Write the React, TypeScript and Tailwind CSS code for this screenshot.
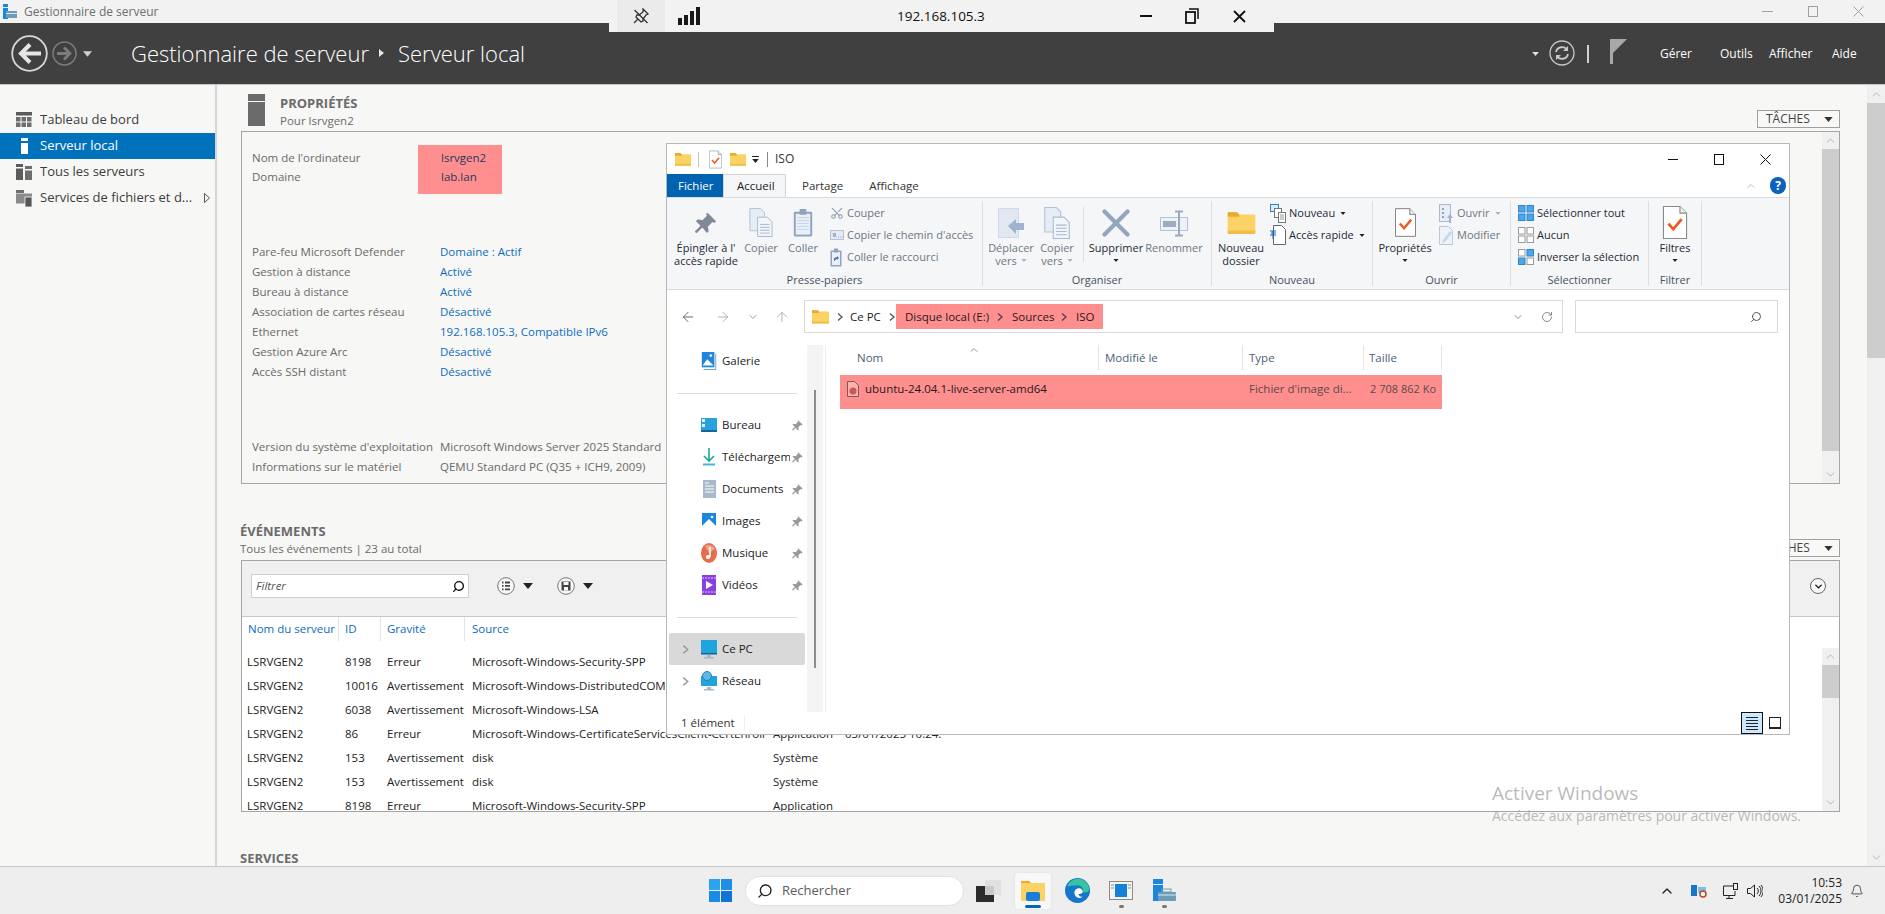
import { ChevronDown, ChevronRight, ChevronUp, ArrowLeft, ArrowRight, ArrowUp, RotateCw, Search, Scissors, Bell } from "lucide-react";
import type { ReactNode } from "react";

type IconProps = { className?: string };

const Tri = ({ className = "" }: IconProps) => (
  <svg viewBox="0 0 10 6" className={className}>
    <path d="M0 0h10L5 6z" fill="currentColor" />
  </svg>
);

const Chev = ({ className = "" }: IconProps) => (
  <svg viewBox="0 0 8 10" className={className}>
    <path d="M2 1.5 6 5 2 8.5" fill="none" stroke="currentColor" strokeWidth="1.3" />
  </svg>
);

const Folder = ({ className = "" }: IconProps) => (
  <svg viewBox="0 0 24 20" className={className}>
    <path d="M0 2a1 1 0 0 1 1-1h7l2 2h13a1 1 0 0 1 1 1v15a1 1 0 0 1-1 1H1a1 1 0 0 1-1-1z" fill="#fbd264" />
    <path d="M0 2a1 1 0 0 1 1-1h7l2 2v2H0z" fill="#e8ab2e" />
    <path d="M0 17h24v2a1 1 0 0 1-1 1H1a1 1 0 0 1-1-1z" fill="#f1bd4a" />
  </svg>
);

const PinIcon = ({ className = "" }: IconProps) => (
  <svg viewBox="0 0 24 24" className={className}>
    <path d="M14 1l9 9-2 2-2-1-5 5 1 5-2 2-5-6-6 6-2-1 0-1 6-6-5-5 2-2 5 1 5-5-1-2z" fill="currentColor" />
  </svg>
);

const DocCheck = ({ className = "", stroke = "#7d7d7d" }: IconProps & { stroke?: string }) => (
  <svg viewBox="0 0 22 30" className={className}>
    <path d="M.5.5h15l6 6v23H.5z" fill="#fff" stroke={stroke} />
    <path d="M15.5.5v6h6" fill="#eee" stroke={stroke} />
    <path d="M5 16l4.500 5L17 12" fill="none" stroke="#ea5a24" strokeWidth="2.500" />
  </svg>
);

const CopyDocs = ({ className = "" }: IconProps) => (
  <svg viewBox="0 0 24 30" className={className}>
    <path d="M.5.5h11l4 4v19H.5z" fill="#e6edf6" stroke="#b3c2d6" />
    <path d="M8.500 9.500h10l5 5v15h-15z" fill="#f2f6fb" stroke="#a9b9ce" />
    <path d="M11 17h10M11 20h10M11 23h10M11 26h10" stroke="#a9b9ce" />
  </svg>
);

const Clipboard = ({ className = "" }: IconProps) => (
  <svg viewBox="0 0 20 30" className={className}>
    <rect x=".5" y="4" width="19" height="25.500" rx="1.500" fill="#8fa3bf" />
    <rect x="2.500" y="6" width="15" height="21.500" fill="#eaf0f7" />
    <rect x="6.500" y="1" width="7" height="6" fill="#8fa3bf" />
    <path d="M4 10h12M4 13h12M4 16h12M4 19h12M4 22h12" stroke="#c5d1e1" />
  </svg>
);

const MoveDoc = ({ className = "" }: IconProps) => (
  <svg viewBox="0 0 26 30" className={className}>
    <rect x=".5" y=".5" width="20" height="29" fill="#e1e8f2" stroke="#d0dbe9" />
    <path d="M10 18l8-7v4h8v7h-8v4z" fill="#9fb3cc" />
  </svg>
);

const DeleteX = ({ className = "" }: IconProps) => (
  <svg viewBox="0 0 28 28" className={className}>
    <path d="M2.500 2.500l23 23M25.500 2.500l-23 23" stroke="#94a6bf" strokeWidth="4.200" strokeLinecap="round" />
  </svg>
);

const RenameIcon = ({ className = "" }: IconProps) => (
  <svg viewBox="0 0 28 28" className={className}>
    <rect x=".5" y="8.500" width="27" height="13" fill="#eef2f8" stroke="#b4c3d8" />
    <rect x="3" y="12" width="13" height="6" fill="#9eabbc" />
    <path d="M15 2.500h8M15 26.500h8M19 2.500v24" stroke="#9aabc2" strokeWidth="2" />
  </svg>
);

const SquaresIcon = ({ fills, strokes }: { fills: string[]; strokes: string[] }) => (
  <svg viewBox="0 0 16 16" className="w-[16px] h-[16px]">
    {[
      [0, 0],
      [8.5, 0],
      [0, 8.5],
      [8.5, 8.5],
    ].map(([x, y], i) => (
      <rect key={i} x={x + 0.5} y={y + 0.5} width="6.500" height="6.500" fill={fills[i]} stroke={strokes[i]} />
    ))}
  </svg>
);

const NewItemIcon = () => (
  <svg viewBox="0 0 16 19" className="w-[16px] h-[19px]">
    <rect x=".5" y=".5" width="8" height="7" fill="#dcecf9" stroke="#2f7fc2" />
    <rect x="4.500" y="4.500" width="7" height="9" fill="#fff" stroke="#777" />
    <rect x="8.500" y="8.500" width="7" height="10" fill="#fff" stroke="#777" />
    <path d="M10 11h4M10 13h4M10 15h4" stroke="#999" />
  </svg>
);

const EasyAccessIcon = () => (
  <svg viewBox="0 0 16 20" className="w-[16px] h-[20px]">
    <path d="M3.500 .5h8l4 4v15h-12z" fill="#fff" stroke="#666" />
    <path d="M0 6h6M1 8h5M0 10h6M3 6v8" stroke="#1b67b0" />
  </svg>
);

const OpenIcon = () => (
  <svg viewBox="0 0 14 19" className="w-[14px] h-[19px]">
    <rect x=".5" y=".5" width="11" height="17" fill="#e6edf6" stroke="#a9b9ce" />
    <path d="M3 4h2v2H3zM3 8h2v2H3zM3 12h2v2H3z" fill="#8fa3bf" />
    <path d="M11 10l-3 4h2v5h2v-5h2z" fill="#9fb3cc" />
  </svg>
);

const EditIcon = () => (
  <svg viewBox="0 0 14 19" className="w-[14px] h-[19px]">
    <path d="M.5.500h9l4 4v14H.5z" fill="#eef3f9" stroke="#b8c7da" />
    <path d="M4 14L11 5l2 2-7 9-3 1z" fill="#c7d6e8" />
  </svg>
);

const PathIcon = () => (
  <svg viewBox="0 0 14 10" className="w-[14px] h-[10px]">
    <rect x=".5" y=".5" width="13" height="9" fill="#e4ebf4" stroke="#b4c3d8" />
    <path d="M3 3l1 4 1-4 1 4M8 7h1M10 7h1M12 7h1" stroke="#7d8ea6" strokeWidth=".7" fill="none" />
  </svg>
);

const PasteLinkIcon = () => (
  <svg viewBox="0 0 12 19" className="w-[12px] h-[19px]">
    <rect x=".5" y="2.500" width="11" height="16" rx="1" fill="#8fa3bf" />
    <rect x="2" y="4" width="8" height="13" fill="#eaf0f7" />
    <rect x="4" y=".5" width="4" height="4" fill="#8fa3bf" />
    <path d="M4 13v-3l3-1V8l2 2-2 2v-1l-2 1v1z" fill="#4d78a8" />
  </svg>
);

const BigButton = ({ icon, lines, tone, caret, className }: { icon: ReactNode; lines: string[]; tone: string; caret?: "dark" | "light"; className: string }) => (
  <div className={`flex flex-col items-center shrink-0 pt-[2px] ${className}`}>
    <div className="h-[37px] flex items-center justify-center">{icon}</div>
    <div className={`text-[11px] leading-[13px] text-center whitespace-nowrap ${tone}`}>
      {lines[0]}
      {lines[1] ? (
        <div className="flex items-center justify-center gap-1">
          {lines[1]}
          {caret === "light" && <Tri className="w-[6px] h-[3px] text-[#a8b0ba]" />}
        </div>
      ) : (
        caret && (
          <div className="flex justify-center h-[13px] items-center">
            <Tri className="w-[6px] h-[3px] text-[#222]" />
          </div>
        )
      )}
    </div>
  </div>
);

const SmallRow = ({ icon, label, tone, slot, caret }: { icon: ReactNode; label: string; tone: string; slot: string; caret?: "dark" | "light" }) => (
  <div className="h-[22px] flex items-center whitespace-nowrap">
    <div className={`shrink-0 flex items-center ${slot}`}>{icon}</div>
    <span className={`text-[11px] ${tone}`}>{label}</span>
    {caret === "dark" && <Tri className="w-[6px] h-[3px] text-[#222] ml-[5px]" />}
    {caret === "light" && <Tri className="w-[6px] h-[3px] text-[#a8b0ba] ml-[5px]" />}
  </div>
);

const RibbonGroup = ({ label, className, children }: { label: string; className: string; children: ReactNode }) => (
  <div className={`flex flex-col shrink-0 border-r border-[#dcdee0] my-[3px] ${className}`}>
    <div className="flex flex-1 min-h-0 pt-px">{children}</div>
    <div className="text-[11px] leading-[14px] text-center text-[#45525f] -mb-px">{label}</div>
  </div>
);

const VScroll = ({ className, thumb, top }: { className: string; thumb: string; top: string }) => (
  <div className={`flex flex-col bg-[#f0f0f0] shrink-0 ${className}`}>
    <div className={`flex items-center justify-center shrink-0 ${top}`}>
      <ChevronUp className="w-[13px] h-[13px] text-[#a6a6a6]" strokeWidth={1.5} />
    </div>
    <div className={`bg-[#cdcdcd] shrink-0 ${thumb}`} />
    <div className="flex-1" />
    <div className={`flex items-center justify-center shrink-0 ${top}`}>
      <ChevronDown className="w-[13px] h-[13px] text-[#a6a6a6]" strokeWidth={1.5} />
    </div>
  </div>
);

const TasksButton = () => (
  <div className="w-[83px] h-[18px] border border-[#a0a0a0] flex items-center justify-between pl-[8px] pr-[6px] text-[12px] text-[#444] mb-[3px] bg-[#f8f8f6]">
    TÂCHES
    <Tri className="w-[9px] h-[5px] text-[#333]" />
  </div>
);

const propRows = [
  ["Pare-feu Microsoft Defender", "Domaine : Actif"],
  ["Gestion à distance", "Activé"],
  ["Bureau à distance", "Activé"],
  ["Association de cartes réseau", "Désactivé"],
  ["Ethernet", "192.168.105.3, Compatible IPv6"],
  ["Gestion Azure Arc", "Désactivé"],
  ["Accès SSH distant", "Désactivé"],
];

const events = [
  ["8198", "Erreur", "Microsoft-Windows-Security-SPP", "", ""],
  ["10016", "Avertissement", "Microsoft-Windows-DistributedCOM", "", ""],
  ["6038", "Avertissement", "Microsoft-Windows-LSA", "", ""],
  ["86", "Erreur", "Microsoft-Windows-CertificateServicesClient-CertEnroll", "Application", "03/01/2025 10:24:"],
  ["153", "Avertissement", "disk", "Système", ""],
  ["153", "Avertissement", "disk", "Système", ""],
  ["8198", "Erreur", "Microsoft-Windows-Security-SPP", "Application", ""],
];

const NavIcon = ({ kind }: { kind: string }) => {
  if (kind === "galerie")
    return (
      <svg viewBox="0 0 16 20" className="w-[16px] h-[18px]">
        <rect x="0" y="0" width="14" height="17" fill="#1f86dc" />
        <path d="M1 15l5-7 7 7z" fill="#fff" />
        <circle cx="10" cy="4" r="1.500" fill="#fff" />
        <path d="M15 2h1v18H2v-1h13z" fill="#6aa5d8" />
      </svg>
    );
  if (kind === "bureau")
    return (
      <svg viewBox="0 0 16 14" className="w-[16px] h-[14px]">
        <rect width="16" height="14" fill="#2ba1dc" />
        <rect x="1" y="1" width="3" height="3" fill="#dff2fb" />
        <rect x="1" y="6" width="3" height="3" fill="#dff2fb" />
        <rect y="12" width="16" height="2" fill="#17649e" />
      </svg>
    );
  if (kind === "dl")
    return (
      <svg viewBox="0 0 14 18" className="w-[14px] h-[18px]">
        <path d="M7 0v13M2 8l5 5 5-5" fill="none" stroke="#1fa98f" strokeWidth="1.600" />
        <rect x="1" y="15.500" width="12" height="2" fill="#4ab0e8" />
      </svg>
    );
  if (kind === "docs")
    return (
      <svg viewBox="0 0 13 18" className="w-[13px] h-[18px]">
        <rect width="13" height="18" fill="#a9b8cc" />
        <path d="M2 3h4M2 6h9M2 9h9M2 12h9" stroke="#fff" />
      </svg>
    );
  if (kind === "images")
    return (
      <svg viewBox="0 0 14 17" className="w-[14px] h-[17px]">
        <rect width="14" height="17" fill="#1b87e0" />
        <path d="M0 17V13l7-7 7 7v4z" fill="#fff" />
        <circle cx="10" cy="4" r="1.300" fill="#fff" />
      </svg>
    );
  if (kind === "music")
    return (
      <svg viewBox="0 0 16 20" className="w-[16px] h-[20px]">
        <ellipse cx="8" cy="10" rx="8" ry="10" fill="#e56d4b" />
        <path d="M4 3a8 10 0 0 1 10 3L8 10z" fill="#f0a58e" />
        <path d="M9 4v10" stroke="#fff" strokeWidth="1.500" />
        <ellipse cx="7" cy="14" rx="2.200" ry="2" fill="#fff" />
      </svg>
    );
  if (kind === "video")
    return (
      <svg viewBox="0 0 14 20" className="w-[14px] h-[20px]">
        <rect width="14" height="20" fill="#8a3fe0" />
        <path d="M0 3h14M0 17h14" stroke="#c59bf5" strokeWidth="1.500" strokeDasharray="2 1" />
        <path d="M4 6l7 4-7 4z" fill="#fff" />
      </svg>
    );
  if (kind === "pc")
    return (
      <svg viewBox="0 0 16 19" className="w-[16px] h-[19px]">
        <rect width="16" height="14" fill="#1ea6dc" />
        <rect y="13" width="16" height="1.500" fill="#15648f" />
        <path d="M6 15h4v2H6zM3 17h10v1.500H3z" fill="#a9b8c6" />
      </svg>
    );
  return (
    <svg viewBox="0 0 16 20" className="w-[16px] h-[20px]">
      <rect y="5" width="16" height="10" fill="#1ea6dc" />
      <circle cx="6" cy="5" r="4.500" fill="#5ab7e6" stroke="#2f7dab" />
      <path d="M6 16h4v2H6zM3 18h10v1.500H3z" fill="#a9b8c6" />
    </svg>
  );
};

const navPinned = [
  { kind: "bureau", label: "Bureau" },
  { kind: "dl", label: "Téléchargem" },
  { kind: "docs", label: "Documents" },
  { kind: "images", label: "Images" },
  { kind: "music", label: "Musique" },
  { kind: "video", label: "Vidéos" },
];

const NavRow = ({ kind, label, pin, arrow, selected }: { kind: string; label: string; pin?: boolean; arrow?: boolean; selected?: boolean }) => (
  <div className={`h-[32px] mx-[2px] flex items-center rounded-[2px] ${selected ? "bg-[#d9d9d9]" : ""}`}>
    <div className="w-[32px] shrink-0 flex justify-center">{arrow && <Chev className="w-[9px] h-[11px] text-[#9a9a9a]" />}</div>
    <div className="w-[16px] shrink-0 flex justify-center">
      <NavIcon kind={kind} />
    </div>
    <span className="ml-[5px] text-[11.5px] text-[#1c1c1c] whitespace-nowrap w-[68px] overflow-hidden">{label}</span>
    {pin && <PinIcon className="w-[11px] h-[11px] text-[#9a9a9a] ml-[2px]" />}
  </div>
);

function ExplorerWindow() {
  const dark = "text-[#1e2b38]";
  const dim = "text-[#6c7784]";
  return (
    <div className="absolute left-[666px] top-[143px] w-[1124px] h-[592px] bg-white border border-[#b8b8b8] flex flex-col">
      {/* barre de titre */}
      <div className="h-[30px] flex items-center shrink-0">
        <Folder className="w-[16px] h-[14px] ml-[8px]" />
        <div className="w-px h-[15px] bg-[#c4c4c4] ml-[7px]" />
        <DocCheck className="w-[13px] h-[19px] ml-[10px]" stroke="#888" />
        <Folder className="w-[16px] h-[14px] ml-[8px]" />
        <div className="ml-[6px] flex flex-col items-center gap-[2px]">
          <div className="w-[7px] h-px bg-[#222]" />
          <Tri className="w-[7px] h-[4px] text-[#222]" />
        </div>
        <div className="w-px h-[15px] bg-[#888] ml-[8px]" />
        <span className="ml-[7px] text-[12px] text-[#333]">ISO</span>
        <div className="ml-auto flex items-center h-full mr-px">
          <div className="w-[46px] flex justify-center">
            <div className="w-[10px] h-px bg-[#111]" />
          </div>
          <div className="w-[46px] flex justify-center">
            <div className="w-[10px] h-[11px] border border-[#111]" />
          </div>
          <div className="w-[46px] flex justify-center">
            <svg viewBox="0 0 11 11" className="w-[11px] h-[11px]">
              <path d="M.5.5l10 10M10.500.5l-10 10" stroke="#111" />
            </svg>
          </div>
        </div>
      </div>

      {/* onglets */}
      <div className="h-[23px] flex items-stretch shrink-0 text-[11.5px] relative">
        <div className="w-[56px] bg-[#0063b1] text-white flex items-center pl-[11px]">Fichier</div>
        <div className="w-[63px] bg-[#f5f6f7] border-x border-t border-[#d4d6d8] text-[#222] flex items-center pl-[13px]">Accueil</div>
        <div className="flex items-center pl-[16px] text-[#333]">Partage</div>
        <div className="flex items-center pl-[26px] text-[#333]">Affichage</div>
        <div className="ml-auto flex items-center gap-[13px] pr-[3px]">
          <ChevronUp className="w-[12px] h-[12px] text-[#aaa]" strokeWidth={1.5} />
          <div className="w-[16px] h-[17px] rounded-full bg-[#0a62bd] text-white text-[12px] font-bold flex items-center justify-center">?</div>
        </div>
      </div>

      {/* ruban */}
      <div className="h-[93px] bg-[#f5f6f7] border-y border-[#d9dbdd] flex shrink-0">
        <RibbonGroup label="Presse-papiers" className="w-[316px]">
          <BigButton
            className="w-[78px]"
            tone={dark}
            lines={["Épingler à l'", "accès rapide"]}
            icon={<PinIcon className="w-[22px] h-[24px] text-[#808a96]" />}
          />
          <BigButton className="w-[32px]" tone={dim} lines={["Copier"]} icon={<CopyDocs className="w-[24px] h-[29px]" />} />
          <BigButton className="w-[52px]" tone={dim} lines={["Coller"]} icon={<Clipboard className="w-[20px] h-[29px]" />} />
          <div className="ml-[1px]">
            <SmallRow slot="w-[17px]" tone={dim} label="Couper" icon={<Scissors className="w-[14px] h-[16px] text-[#8b9bb0] -rotate-90" strokeWidth={1.800} />} />
            <SmallRow slot="w-[17px]" tone={dim} label="Copier le chemin d'accès" icon={<PathIcon />} />
            <SmallRow slot="w-[17px]" tone={dim} label="Coller le raccourci" icon={<PasteLinkIcon />} />
          </div>
        </RibbonGroup>

        <RibbonGroup label="Organiser" className="w-[229px]">
          <BigButton className="w-[56px]" tone={dim} lines={["Déplacer", "vers"]} caret="light" icon={<MoveDoc className="w-[26px] h-[30px]" />} />
          <BigButton className="w-[36px]" tone={dim} lines={["Copier", "vers"]} caret="light" icon={<CopyDocs className="w-[26px] h-[32px]" />} />
          <div className="w-[8px] shrink-0" />
          <div className="w-px h-[55px] bg-[#dcdee0] mt-[5px] shrink-0" />
          <BigButton className="w-[64px]" tone={dark} lines={["Supprimer"]} caret="dark" icon={<DeleteX className="w-[28px] h-[28px]" />} />
          <BigButton className="w-[52px]" tone={dim} lines={["Renommer"]} icon={<RenameIcon className="w-[28px] h-[28px]" />} />
        </RibbonGroup>

        <RibbonGroup label="Nouveau" className="w-[161px]">
          <BigButton className="w-[58px]" tone={dark} lines={["Nouveau", "dossier"]} icon={<Folder className="w-[29px] h-[23px]" />} />
          <div>
            <SmallRow slot="w-[19px]" tone={dark} label="Nouveau" caret="dark" icon={<NewItemIcon />} />
            <SmallRow slot="w-[19px]" tone={dark} label="Accès rapide" caret="dark" icon={<EasyAccessIcon />} />
          </div>
        </RibbonGroup>

        <RibbonGroup label="Ouvrir" className="w-[138px]">
          <BigButton className="w-[64px]" tone={dark} lines={["Propriétés"]} caret="dark" icon={<DocCheck className="w-[21px] h-[29px]" />} />
          <div className="ml-[2px]">
            <SmallRow slot="w-[18px]" tone={dim} label="Ouvrir" caret="light" icon={<OpenIcon />} />
            <SmallRow slot="w-[18px]" tone={dim} label="Modifier" icon={<EditIcon />} />
          </div>
        </RibbonGroup>

        <RibbonGroup label="Sélectionner" className="w-[138px]">
          <div className="ml-[7px]">
            <SmallRow
              slot="w-[19px]"
              tone={dark}
              label="Sélectionner tout"
              icon={<SquaresIcon fills={["#4ba6ea", "#4ba6ea", "#4ba6ea", "#4ba6ea"]} strokes={["#2f86cf", "#2f86cf", "#2f86cf", "#2f86cf"]} />}
            />
            <SmallRow
              slot="w-[19px]"
              tone={dark}
              label="Aucun"
              icon={<SquaresIcon fills={["#fff", "#fff", "#fff", "#fff"]} strokes={["#9a9a9a", "#9a9a9a", "#9a9a9a", "#9a9a9a"]} />}
            />
            <SmallRow
              slot="w-[19px]"
              tone={dark}
              label="Inverser la sélection"
              icon={<SquaresIcon fills={["#fff", "#4ba6ea", "#4ba6ea", "#fff"]} strokes={["#9a9a9a", "#2f86cf", "#2f86cf", "#9a9a9a"]} />}
            />
          </div>
        </RibbonGroup>

        <RibbonGroup label="Filtrer" className="w-[53px]">
          <BigButton className="w-[52px]" tone={dark} lines={["Filtres"]} caret="dark" icon={<DocCheck className="w-[26px] h-[33px]" stroke="#8a8a8a" />} />
        </RibbonGroup>
      </div>

      {/* barre d'adresse */}
      <div className="h-[55px] pt-[10px] pl-[4px] flex items-start shrink-0">
        <div className="w-[34px] h-[33px] flex items-center justify-center">
          <ArrowLeft className="w-[16px] h-[16px] text-[#555]" strokeWidth={1.300} />
        </div>
        <div className="w-[36px] h-[33px] flex items-center justify-center">
          <ArrowRight className="w-[16px] h-[16px] text-[#a8a8a8]" strokeWidth={1.300} />
        </div>
        <div className="w-[24px] h-[33px] flex items-center justify-center">
          <ChevronDown className="w-[12px] h-[12px] text-[#777]" strokeWidth={1.500} />
        </div>
        <div className="w-[34px] h-[33px] flex items-center justify-center">
          <ArrowUp className="w-[16px] h-[16px] text-[#a8a8a8]" strokeWidth={1.300} />
        </div>
        <div className="ml-[5px] w-[759px] h-[33px] border border-[#d9d9d9] flex items-center pl-[7px] text-[11.5px] text-[#1c1c1c] whitespace-nowrap">
          <Folder className="w-[17px] h-[15px] shrink-0" />
          <div className="w-[21px] flex justify-center shrink-0">
            <Chev className="w-[8px] h-[10px] text-[#555]" />
          </div>
          <span className="w-[38px] shrink-0">Ce PC</span>
          <Chev className="w-[8px] h-[10px] text-[#555] shrink-0" />
          <div className="w-[207px] h-[25px] bg-[#ff8f8f] flex items-center pl-[9px] shrink-0">
            <span className="w-[91px] shrink-0">Disque local (E:)</span>
            <Chev className="w-[8px] h-[10px] text-[#444] shrink-0" />
            <span className="w-[48px] ml-[8px] shrink-0">Sources</span>
            <Chev className="w-[8px] h-[10px] text-[#444] shrink-0" />
            <span className="ml-[8px]">ISO</span>
          </div>
          <div className="ml-auto flex items-center gap-[17px] pr-[9px]">
            <ChevronDown className="w-[12px] h-[12px] text-[#666]" strokeWidth={1.500} />
            <RotateCw className="w-[12px] h-[12px] text-[#666]" strokeWidth={1.500} />
          </div>
        </div>
        <div className="ml-[12px] w-[203px] h-[33px] border border-[#d9d9d9] flex items-center justify-end pr-[15px]">
          <Search className="w-[12px] h-[12px] text-[#555] -scale-x-100" strokeWidth={2} />
        </div>
      </div>

      {/* volet + liste */}
      <div className="flex flex-1 min-h-0">
        <div className="w-[140px] shrink-0">
          <NavRow kind="galerie" label="Galerie" />
          <div className="h-[32px] flex items-center px-[10px]">
            <div className="w-full h-px bg-[#dcdcdc]" />
          </div>
          {navPinned.map((n) => (
            <NavRow key={n.kind} {...n} pin />
          ))}
          <div className="h-[32px] flex items-center px-[10px]">
            <div className="w-full h-px bg-[#dcdcdc]" />
          </div>
          <NavRow kind="pc" label="Ce PC" arrow selected />
          <NavRow kind="net" label="Réseau" arrow />
        </div>
        <div className="w-[16px] shrink-0 bg-[#f4f4f4] flex justify-center pt-[45px]">
          <div className="w-[2px] h-[278px] bg-[#8c8c8c]" />
        </div>
        <div className="w-[2px] shrink-0" />
        <div className="w-px bg-[#eeeeee] shrink-0" />
        <div className="flex-1 min-w-0">
          <div className="flex h-[30px] ml-[14px] text-[11.5px] text-[#4c607a] relative">
            <ChevronUp className="absolute left-[128px] top-[-1px] w-[12px] h-[12px] text-[#777]" strokeWidth={1.500} />
            <div className="w-[259px] h-[25px] border-r border-[#e5e5e5] pl-[17px] flex items-center">Nom</div>
            <div className="w-[144px] h-[25px] border-r border-[#e5e5e5] pl-[6px] flex items-center">Modifié le</div>
            <div className="w-[121px] h-[25px] border-r border-[#e5e5e5] pl-[6px] flex items-center">Type</div>
            <div className="w-[78px] h-[25px] border-r border-[#e5e5e5] pl-[5px] flex items-center">Taille</div>
          </div>
          <div className="ml-[14px] w-[602px] h-[34px] bg-[#ff8f8f] flex items-center pb-[6px] text-[11.5px] text-[#1c1c1c]">
            <svg viewBox="0 0 12 16" className="w-[12px] h-[16px] ml-[7px] shrink-0">
              <path d="M.5.500h7l4 4v11H.5z" fill="#ffb0a8" stroke="#7a5a5a" />
              <circle cx="6" cy="10" r="3.500" fill="#c25a5e" />
            </svg>
            <span className="ml-[6px] w-[384px] shrink-0">ubuntu-24.04.1-live-server-amd64</span>
            <span className="text-[#5a4a4a] w-[115px] shrink-0 overflow-hidden whitespace-nowrap">Fichier d'image di...</span>
            <span className="ml-auto pr-[6px] text-[#5a4a4a] text-[11px]">2 708 862 Ko</span>
          </div>
        </div>
      </div>

      {/* barre d'etat */}
      <div className="h-[22px] flex items-center shrink-0 text-[11.5px] text-[#333]">
        <span className="ml-[14px] w-[63px]">1 élément</span>
        <div className="w-px h-[16px] bg-[#eeeeee]" />
        <div className="ml-auto w-[22px] h-[22px] bg-[#cce8ff] border border-[#111] flex flex-col items-center justify-center gap-[2px]">
          <div className="w-[12px] h-px bg-[#222]" />
          <div className="w-[12px] h-px bg-[#222]" />
          <div className="w-[12px] h-px bg-[#222]" />
          <div className="w-[12px] h-px bg-[#222]" />
          <div className="w-[12px] h-px bg-[#222]" />
        </div>
        <div className="w-[22px] h-[20px] ml-[1px] mr-[3px] flex items-center justify-center">
          <div className="w-[12px] h-[12px] border border-[#222] border-b-[2px]" />
        </div>
      </div>
    </div>
  );
}

const Header = () => (
  <div className="h-[62px] bg-[#404040] border-b border-[#c8c8c8] flex items-center shrink-0 text-white relative">
    <svg viewBox="0 0 37 37" className="w-[37px] h-[37px] ml-[11px] mt-[-1px]">
      <circle cx="18.500" cy="18.500" r="17.300" fill="none" stroke="#d8d8d8" strokeWidth="1.800" />
      <path d="M30 18.500H11M19 9.500l-9 9 9 9" fill="none" stroke="#e6e6e6" strokeWidth="4" />
    </svg>
    <svg viewBox="0 0 25 25" className="w-[25px] h-[25px] ml-[4px] mt-[-1px]">
      <circle cx="12.500" cy="12.500" r="11.500" fill="none" stroke="#7c7c7c" strokeWidth="1.500" />
      <path d="M5 12.500h13M12 6.500l6 6-6 6" fill="none" stroke="#7c7c7c" strokeWidth="2.800" />
    </svg>
    <Tri className="w-[9px] h-[6px] ml-[6px] text-[#d0d0d0]" />
    <span className="ml-[39px] text-[22px] font-light w-[248px] whitespace-nowrap">Gestionnaire de serveur</span>
    <svg viewBox="0 0 5 8" className="w-[5px] h-[8px] mt-[-2px]">
      <path d="M0 0l5 4-5 4z" fill="#e8e8e8" />
    </svg>
    <span className="ml-[14px] text-[22px] font-light whitespace-nowrap">Serveur local</span>
    <div className="ml-auto mr-[20px] flex items-center text-[12px] h-full">
      <Tri className="w-[7px] h-[4px] text-[#e0e0e0]" />
      <svg viewBox="0 0 26 26" className="w-[26px] h-[26px] ml-[10px] mt-[-1px]">
        <circle cx="13" cy="13" r="12" fill="none" stroke="#c8c8c8" strokeWidth="1.300" />
        <path d="M7 12a6 6 0 0 1 11-2M19 14a6 6 0 0 1-11 2" fill="none" stroke="#c8c8c8" strokeWidth="1.800" />
        <path d="M19 6v5h-5zM7 20v-5h5z" fill="#c8c8c8" />
      </svg>
      <div className="w-[2px] h-[18px] bg-[#d0d0d0] ml-[12px]" />
      <svg viewBox="0 0 17 25" className="w-[17px] h-[25px] ml-[21px] mt-[-4px]">
        <rect width="3" height="25" fill="#a8a8a8" />
        <path d="M3 0h14L3 14z" fill="#a8a8a8" />
      </svg>
      <span className="ml-[33px] w-[60px]">Gérer</span>
      <span className="w-[49px]">Outils</span>
      <span className="w-[63px]">Afficher</span>
      <span className="w-[33px]">Aide</span>
    </div>
  </div>
);

const sideItems = [
  { label: "Tableau de bord", icon: "grid" },
  { label: "Serveur local", icon: "server", active: true },
  { label: "Tous les serveurs", icon: "servers" },
  { label: "Services de fichiers et d...", icon: "files", more: true },
];

const SideIcon = ({ icon, active }: { icon: string; active?: boolean }) => {
  if (icon === "grid")
    return (
      <svg viewBox="0 0 16 16" className="w-[16px] h-[16px]">
        <rect width="16" height="3.500" fill="#5c5c5c" />
        {[0, 5.5, 11].map((x) =>
          [5, 10.5].map((y) => <rect key={`${x}-${y}`} x={x} y={y} width="4.500" height="4.500" fill="#6e6e6e" />),
        )}
      </svg>
    );
  if (icon === "server")
    return (
      <svg viewBox="0 0 7 16" className="w-[7px] h-[16px]">
        <rect width="7" height="3" fill={active ? "#fff" : "#666"} />
        <rect y="5" width="7" height="11" fill={active ? "#fff" : "#666"} />
      </svg>
    );
  if (icon === "servers")
    return (
      <svg viewBox="0 0 16 16" className="w-[16px] h-[16px]">
        <rect width="7" height="3" fill="#5c5c5c" />
        <rect y="4.500" width="7" height="11.500" fill="#5c5c5c" />
        <rect x="9" y="2" width="7" height="3" fill="#6e6e6e" />
        <rect x="9" y="6.500" width="7" height="9.500" fill="#6e6e6e" />
      </svg>
    );
  return (
    <svg viewBox="0 0 16 17" className="w-[16px] h-[17px]">
      <rect width="8" height="3" fill="#6e6e6e" />
      <rect y="3.500" width="16" height="10" fill="#8a8a8a" />
      <rect x="9" y="7" width="7" height="10" fill="#555" stroke="#f7f7f5" strokeWidth=".8" />
    </svg>
  );
};

const Sidebar = () => (
  <div className="w-[217px] shrink-0 bg-[#f7f7f5] border-r-[2px] border-[#d6d6d6] pt-[22px] text-[13px]">
    {sideItems.map((item) => (
      <div
        key={item.label}
        className={`h-[26px] w-[215px] flex items-center ${item.active ? "bg-[#0072bc] text-white" : "text-[#3c3c3c]"}`}
      >
        <div className="w-[40px] shrink-0 flex justify-center pl-[8px]">
          <SideIcon icon={item.icon} active={item.active} />
        </div>
        <span className="whitespace-nowrap w-[160px] overflow-hidden">{item.label}</span>
        {item.more && (
          <svg viewBox="0 0 6 10" className="w-[6px] h-[10px] ml-[4px]">
            <path d="M.5.5l5 4.500-5 4.500z" fill="none" stroke="#555" />
          </svg>
        )}
      </div>
    ))}
  </div>
);

const PropertiesPanel = () => (
  <div className="h-[353px] border border-[#a5a5a5] flex shrink-0">
    <div className="flex-1 min-w-0 pl-[10px] pt-[13px] text-[11.5px] text-[#6a6a6a]">
      <div className="flex">
        <div className="w-[166px] pt-[3px] leading-[19px]">
          <div>Nom de l'ordinateur</div>
          <div>Domaine</div>
        </div>
        <div className="w-[84px] h-[49px] bg-[#ff8f8f] pl-[23px] pt-[3px] leading-[19px] text-[#243a5a]">
          <div>lsrvgen2</div>
          <div>lab.lan</div>
        </div>
      </div>
      <div className="mt-[48px] grid grid-cols-[188px_1fr] leading-[20px]">
        {propRows.map(([k, v]) => (
          <div key={k} className="contents">
            <div>{k}</div>
            <div className="text-[#0d6cc0]">{v}</div>
          </div>
        ))}
      </div>
      <div className="mt-[55px] grid grid-cols-[188px_1fr] leading-[20px] whitespace-nowrap">
        <div>Version du système d'exploitation</div>
        <div>Microsoft Windows Server 2025 Standard</div>
        <div>Informations sur le matériel</div>
        <div>QEMU Standard PC (Q35 + ICH9, 2009)</div>
      </div>
    </div>
    <VScroll className="w-[17px]" top="h-[17px]" thumb="h-[302px]" />
  </div>
);

const EventsPanel = () => (
  <div className="h-[252px] border border-[#a5a5a5] flex flex-col shrink-0 bg-white">
    <div className="h-[56px] bg-[#f0f0f0] border-b border-[#c8c8c8] flex items-start pt-[13px] pl-[9px] shrink-0">
      <div className="w-[218px] h-[24px] bg-white border border-[#cfcfcf] flex items-center justify-between pl-[4px] pr-[3px]">
        <span className="text-[11.5px] italic text-[#555]">Filtrer</span>
        <Search className="w-[13px] h-[13px] text-[#111] -scale-x-100" strokeWidth={2.500} />
      </div>
      <svg viewBox="0 0 18 18" className="ml-[28px] w-[18px] h-[18px] mt-[3px]">
        <circle cx="9" cy="9" r="8.300" fill="#f8f8f8" stroke="#777" />
        <path d="M5 5.500h1.500M5 8.900h1.500M5 12.300h1.500M8 5.500h5M8 8.900h5M8 12.300h5" stroke="#444" strokeWidth="1.800" />
      </svg>
      <Tri className="w-[10px] h-[6px] ml-[8px] mt-[9px] text-[#222]" />
      <svg viewBox="0 0 18 18" className="ml-[24px] w-[18px] h-[18px] mt-[3px]">
        <circle cx="9" cy="9" r="8.300" fill="#f8f8f8" stroke="#777" />
        <path d="M4.500 4.500h9v9h-9z" fill="#444" />
        <rect x="6.500" y="5" width="5" height="3" fill="#f8f8f8" />
        <rect x="7" y="10" width="4" height="3.500" fill="#f8f8f8" />
      </svg>
      <Tri className="w-[10px] h-[6px] ml-[8px] mt-[9px] text-[#222]" />
      <div className="ml-auto mr-[13px] w-[16px] h-[16px] mt-[4px] rounded-full border border-[#666] bg-[#f8f8f8] flex items-center justify-center">
        <ChevronDown className="w-[11px] h-[11px] text-[#111]" strokeWidth={3} />
      </div>
    </div>
    <div className="h-[31px] flex items-start shrink-0 text-[11.5px] text-[#0d6cc0]">
      <div className="w-[97px] h-[24px] pl-[6px] flex items-center border-r border-[#e4e4e4]">Nom du serveur</div>
      <div className="w-[42px] h-[24px] pl-[6px] flex items-center border-r border-[#e4e4e4]">ID</div>
      <div className="w-[84px] h-[24px] pl-[6px] flex items-center border-r border-[#e4e4e4]">Gravité</div>
      <div className="h-[24px] pl-[7px] flex items-center">Source</div>
    </div>
    <div className="flex flex-1 min-h-0">
      <div className="flex-1 min-w-0 overflow-hidden pt-[2px] text-[11.5px] text-[#222]">
        {events.map((e, i) => (
          <div key={i} className="grid grid-cols-[98px_42px_85px_301px_72px_1fr] h-[24px] items-center pl-[5px] whitespace-nowrap">
            <div>LSRVGEN2</div>
            <div>{e[0]}</div>
            <div>{e[1]}</div>
            <div>{e[2]}</div>
            <div>{e[3]}</div>
            <div>{e[4]}</div>
          </div>
        ))}
      </div>
      <VScroll className="w-[17px]" top="h-[17px]" thumb="h-[33px]" />
    </div>
  </div>
);

const Taskbar = () => (
  <div className="h-[48px] shrink-0 bg-[#eeeeee] border-t border-[#c6c6c6] flex items-center relative">
    <svg viewBox="0 0 23 23" className="w-[23px] h-[23px] ml-[709px]">
      <rect width="11" height="11" fill="#2aa4ec" />
      <rect x="12" width="11" height="11" fill="#1e8fe6" />
      <rect y="12" width="11" height="11" fill="#1a8be4" />
      <rect x="12" y="12" width="11" height="11" fill="#0f74d8" />
    </svg>
    <div className="ml-[13px] w-[219px] h-[30px] bg-white rounded-full border border-[#e2e2e2] flex items-center pl-[11px]">
      <Search className="w-[16px] h-[16px] text-[#222] -scale-x-100" strokeWidth={2} />
      <span className="ml-[9px] text-[13px] text-[#5c5c5c]">Rechercher</span>
    </div>
    <svg viewBox="0 0 26 24" className="w-[26px] h-[24px] ml-[12px]">
      <rect x="9" y="1" width="16" height="15" fill="#e0e0e0" />
      <rect y="7" width="18" height="16" fill="#2b2b2b" />
      <rect x="9" y="7" width="9" height="9" fill="#c9c9c9" />
    </svg>
    <div className="ml-[12px] w-[38px] h-[38px] bg-[#f8f8f8] rounded-[4px] border border-[#e8e8e8] flex flex-col items-center relative">
      <svg viewBox="0 0 24 21" className="w-[24px] h-[21px] mt-[7px]">
        <path d="M0 1h8l2 2h14v18H0z" fill="#fbd264" />
        <path d="M0 1h8l2 2H0z" fill="#e8ab2e" />
        <rect x="5" y="12" width="14" height="9" rx="2" fill="#1b7ed6" />
      </svg>
      <div className="absolute bottom-[1px] w-[16px] h-[3px] rounded-full bg-[#0067c0]" />
    </div>
    <svg viewBox="0 0 24 24" className="w-[25px] h-[25px] ml-[13px]">
      <circle cx="12" cy="12" r="12" fill="#1477cc" />
      <path d="M2 8a11 11 0 0 1 21 1c1 5-4 6-6 4 1-3-1-6-5-6-4 0-8 1-10 1z" fill="#35c5a0" />
      <path d="M9 14c0-3 3-5 6-4 2 1 2 3 2 4-2 2-4 1-4 1s0 3 4 3c-4 3-8 0-8-4z" fill="#fff" />
    </svg>
    <div className="ml-[19px] w-[24px] flex flex-col items-center relative">
      <svg viewBox="0 0 24 19" className="w-[24px] h-[19px]">
        <rect x=".5" y=".5" width="23" height="18" fill="#f4f4f4" stroke="#8a8a8a" />
        <rect x="6" y="3" width="12" height="13" fill="#1480d6" />
        <path d="M2 4h3M2 7h3M19 4h3M19 7h3" stroke="#8a8a8a" />
      </svg>
      <div className="absolute top-[24px] w-[5px] h-[3px] rounded-full bg-[#777]" />
    </div>
    <div className="ml-[20px] w-[23px] flex flex-col items-center relative">
      <svg viewBox="0 0 23 24" className="w-[23px] h-[24px]">
        <rect width="10" height="5" fill="#1a86dc" />
        <rect y="6" width="10" height="16" fill="#1a86dc" />
        <rect x="5" y="13" width="18" height="9" rx="1" fill="#6d9bb8" />
        <rect x="9" y="10" width="9" height="3" fill="none" stroke="#6d9bb8" />
        <path d="M5 16h18" stroke="#dbe8f1" />
      </svg>
      <div className="absolute top-[26px] w-[5px] h-[3px] rounded-full bg-[#777]" />
    </div>
    <div className="ml-auto flex items-center mr-[21px]">
      <ChevronUp className="w-[16px] h-[16px] text-[#222]" strokeWidth={2} />
      <svg viewBox="0 0 16 15" className="w-[16px] h-[15px] ml-[16px]">
        <rect y="2" width="6" height="11" fill="#1678c8" />
        <rect x="7" y="4" width="8" height="6" fill="#7fbde8" />
        <circle cx="12" cy="11" r="3" fill="#fff" stroke="#c8421c" strokeWidth="1.500" />
      </svg>
      <svg viewBox="0 0 16 16" className="w-[16px] h-[16px] ml-[16px]">
        <path d="M11 3H.5v9.500H12V8M6 12.500v2.500M3 15.500h7" fill="none" stroke="#222" />
        <rect x="10.500" y=".5" width="4" height="6" fill="none" stroke="#222" />
      </svg>
      <svg viewBox="0 0 16 14" className="w-[16px] h-[14px] ml-[8px]">
        <path d="M.5 4.500h3l4-3.500v12l-4-3.500h-3zM10 4a4 4 0 0 1 0 6M12 2a7 7 0 0 1 0 10M14 1a9 9 0 0 1 0 12" fill="none" stroke="#222" />
      </svg>
      <div className="w-[79px] text-right text-[12px] leading-[16px] text-[#222]">
        <div>10:53</div>
        <div>03/01/2025</div>
      </div>
      <Bell className="w-[14px] h-[14px] ml-[8px] text-[#222]" strokeWidth={1.300} />
    </div>
  </div>
);

export default function App() {
  return (
    <div className="w-[1885px] h-[914px] relative overflow-hidden flex flex-col bg-[#f7f7f5] [font-family:'Open_Sans','Noto_Sans',sans-serif]">
      {/* barre de titre du gestionnaire */}
      <div className="h-[23px] bg-[#f2f2f2] flex items-center shrink-0 text-[12px] text-[#6e6e6e]">
        <svg viewBox="0 0 14 15" className="w-[14px] h-[15px] ml-[3px]">
          <rect width="5" height="3" fill="#1a86dc" />
          <rect y="4" width="5" height="11" fill="#1a86dc" />
          <rect x="3" y="7" width="11" height="7" fill="#6d9bb8" />
          <path d="M3 9.500h11" stroke="#dbe8f1" />
        </svg>
        <span className="ml-[7px]">Gestionnaire de serveur</span>
        <div className="ml-auto flex items-center mr-[21px] gap-[35px]">
          <div className="w-[11px] h-px bg-[#a0a0a0]" />
          <div className="w-[10px] h-[11px] border border-[#a0a0a0]" />
          <svg viewBox="0 0 11 11" className="w-[11px] h-[11px]">
            <path d="M.5.5l10 10M10.500.5l-10 10" stroke="#a0a0a0" />
          </svg>
        </div>
      </div>

      <Header />

      <div className="flex flex-1 min-h-0">
        <Sidebar />
        <div className="flex-1 min-w-0 overflow-hidden pl-[24px] pr-[27px]">
          <div className="h-[46px] flex items-end justify-between">
            <div className="flex">
              <svg viewBox="0 0 17 32" className="w-[17px] h-[32px] ml-[7px] mb-[4px]">
                <rect width="17" height="7" fill="#6b6b6b" />
                <rect y="8" width="17" height="24" fill="#6b6b6b" />
              </svg>
              <div className="ml-[15px] mb-[1px] text-[#6b6b6b]">
                <div className="text-[13px] font-bold leading-[18px]">PROPRIÉTÉS</div>
                <div className="text-[11.5px] leading-[18px]">Pour lsrvgen2</div>
              </div>
            </div>
            <TasksButton />
          </div>
          <PropertiesPanel />
          <div className="h-[76px] flex items-end justify-between">
            <div className="-ml-px mb-[2px] text-[#6b6b6b]">
              <div className="text-[13px] font-bold leading-[18px]">ÉVÉNEMENTS</div>
              <div className="text-[11.5px] leading-[18px]">Tous les événements | 23 au total</div>
            </div>
            <TasksButton />
          </div>
          <EventsPanel />
          <div className="-ml-px mt-[37px] text-[13px] font-bold leading-[18px] text-[#6b6b6b]">SERVICES</div>
        </div>
        <VScroll className="w-[18px]" top="h-[18px]" thumb="h-[255px]" />
      </div>

      <Taskbar />

      <ExplorerWindow />

      {/* barre de connexion RDP */}
      <div className="absolute left-[609px] top-0 w-[665px] h-[32px] bg-[#f2f2f2] flex items-center text-[13.5px] text-[#111]">
        <div className="ml-[8px] w-[48px] h-full bg-[#ebebeb] flex items-center justify-center">
          <svg viewBox="0 0 16 16" className="w-[16px] h-[16px]">
            <path d="M10 1l5 5-2 1-3 4v2l-2 1-5-5 1-2h2l4-3z" fill="none" stroke="#333" strokeWidth="1.300" />
            <path d="M5 11l-4 4M1.500 2l13 13" stroke="#333" strokeWidth="1.300" />
          </svg>
        </div>
        <svg viewBox="0 0 23 18" className="w-[23px] h-[18px] ml-[13px]">
          <rect y="11" width="4" height="7" fill="#1a1a1a" />
          <rect x="6" y="8" width="4" height="10" fill="#1a1a1a" />
          <rect x="12" y="4" width="4" height="14" fill="#1a1a1a" />
          <rect x="18" width="4" height="18" fill="#1a1a1a" />
        </svg>
        <span className="ml-[196px] w-[89px] whitespace-nowrap">192.168.105.3</span>
        <div className="ml-[154px] w-[12px] h-[2px] bg-[#111]" />
        <svg viewBox="0 0 14 16" className="w-[14px] h-[16px] ml-[33px]">
          <rect x="1" y="4" width="9" height="11" fill="none" stroke="#111" strokeWidth="1.800" />
          <path d="M4 1h9v10" fill="none" stroke="#111" strokeWidth="1.500" />
        </svg>
        <svg viewBox="0 0 13 13" className="w-[13px] h-[13px] ml-[34px]">
          <path d="M1 1l11 11M12 1L1 12" stroke="#111" strokeWidth="1.800" />
        </svg>
      </div>

      {/* filigrane d'activation */}
      <div className="absolute left-[1492px] top-[781px] pointer-events-none text-[#a8a8a8]/80 whitespace-nowrap">
        <div className="text-[19px] leading-[25px]">Activer Windows</div>
        <div className="text-[14px] leading-[20px]">Accédez aux paramètres pour activer Windows.</div>
      </div>
    </div>
  );
}
